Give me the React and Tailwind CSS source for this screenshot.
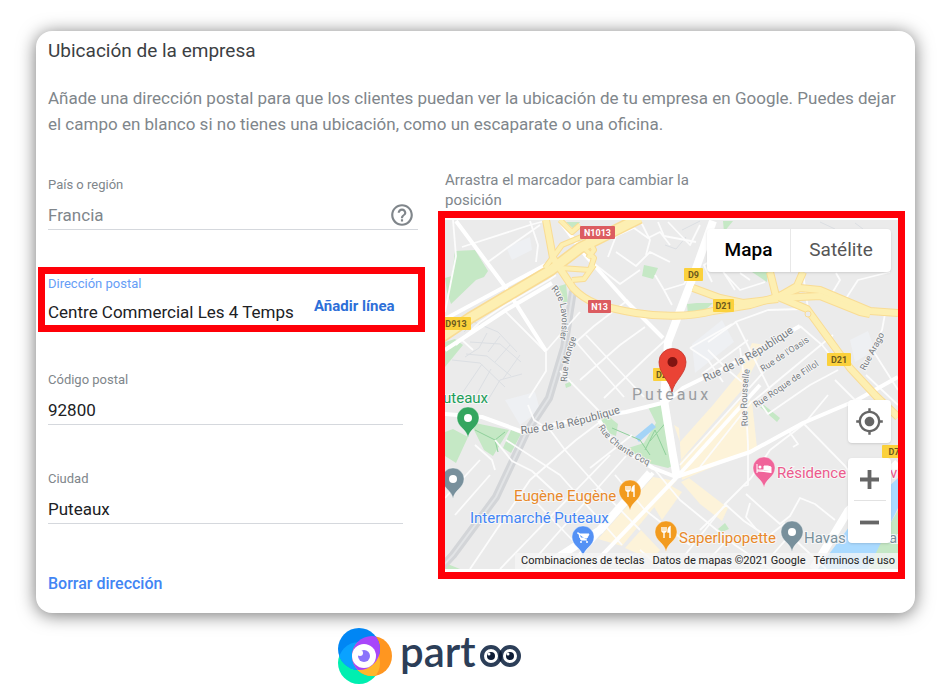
import React from "react";
import { MdHelpOutline, MdMyLocation } from "react-icons/md";

const PARKS = [
  "455,251 475,250 488,271 484,277 476,280 451,304 447,292 445,278 452,276",
  "445,342 455,339 463,345 445,367",
  "644,265 658,268 653,279 642,276",
  "556,287 566,284 568,303 563,302",
  "565,384 572,381 571,386 566,388",
  "470,422 509,430 493,456 484,450",
  "511,430 521,434 511,453 503,448",
  "445,432 453,429 468,437 456,463 445,456",
  "598,420 606,413 613,420 618,424 616,436 606,432",
  "648,407 665,403 674,465 668,468 644,462 625,449 644,443 656,423",
  "687,304 697,303 713,303 703,312 688,315",
  "723,221 733,221 724,232",
  "752,272 768,272 767,282",
  "760,407 764,405 780,418 777,422",
  "734,430 743,424 743,436",
  "718,529 725,523 729,529 722,532",
  "872,556 898,510 898,569 870,569",
  "445,563 460,569 445,569",
  "566,222 580,222 575,230",
];

const COMMERCIAL = [
  "598,539 653,477 676,481 622,546",
  "625,548 641,530 660,550 652,560",
  "674,425 679,428 681,460 742,390 765,345 752,343 740,372 713,405 680,442",
  "680,462 745,395 752,402 757,448 682,480",
  "681,482 689,478 728,508 722,521 700,504",
  "650,500 668,484 682,492 662,520",
];

const PALE_BLOCKS = [
  "506,247 530,237 532,250 512,260",
  "692,344 722,320 734,342 695,373",
  "850,340 868,331 875,350 855,362",
  "505,400 535,392 540,410 520,425",
];

const MINOR = [
  "M445 312L456 256L453 220", "M462 247L530 225L545 221", "M530 221L538 245L536 262",
  "M456 345L480 322L504 306L549 280L556 275", "M488 262L510 246L540 225",
  "M462 340L473 350", "M504 310L546 352L546 371L529 398", "M546 351L580 312",
  "M576 342L594 326L628 300", "M576 342L624 397", "M586 335L644 397", "M560 371L600 412",
  "M604 398L648 356L670 336", "M580 380L620 345L645 327",
  "M592 262L620 284L640 270", "M608 257L616 236L634 228L648 238L660 232L670 245",
  "M616 252L636 266L650 252L670 262", "M640 220L650 240L646 255", "M664 290L684 284L699 262",
  "M655 275L664 290L672 305", "M668 222L690 245L700 225", "M658 222L664 236L696 242",
  "M528 405L534 420L550 430L565 450L598 487L640 530", "M495 440L512 461L532 471L560 497",
  "M506 440L560 475L622 545", "M475 445L492 460L495 470", "M480 460L445 498",
  "M455 515L490 475", "M470 569L530 480L576 440L600 422",
  "M500 569L610 455", "M526 569L626 456", "M534 500L580 548",
  "M590 468L632 435", "M615 475L645 510L690 545",
  "M655 470L680 500L735 545L770 569", "M680 465L770 365", "M700 467L752 401",
  "M708 350L728 370L742 382", "M690 348L708 360L723 382", "M690 348L732 324",
  "M740 348L745 385L748 445L748 485L744 486", "M702 374L748 340", "M752 402L833 335",
  "M724 505L751 478L770 450L804 424L828 395", "M700 530L726 505L744 521L765 535",
  "M746 494L765 511L780 524L790 516L800 498L815 504L835 520",
  "M750 503L746 517L756 529", "M770 535L785 523", "M804 424L845 466L850 473",
  "M788 430L798 444L793 447", "M758 400L768 414L810 385L838 370",
  "M770 390L745 340L736 322L708 342", "M735 322L768 310L802 309",
  "M735 290L703 240L710 235L740 245", "M725 274L740 290L765 282", "M712 282L704 265L720 255",
  "M740 273L750 280", "M803 273L808 309", "M828 300L840 280L836 273",
  "M845 300L858 280L890 272", "M885 314L882 330L872 349L898 390",
  "M800 326L822 345L838 365", "M835 380L860 405",
  "M866 375L898 405", "M685 555L724 506", "M640 550L663 569", "M700 569L730 537",
  "M760 569L790 535L826 569",
];

const BACK_LANES = [
  "M464 332L474 322L498 332L517 352", "M470 342L500 344L521 362", "M466 354L487 356L511 376",
  "M452 360L480 363L505 387", "M482 364L463 392", "M491 369L474 399", "M487 333L479 348L465 357",
  "M500 336L488 352", "M510 345L495 362", "M520 355L503 379", "M488 400L500 380L522 374",
  "M682 230L700 221", "M820 222L835 229", "M855 223L863 229", "M665 245L676 249L686 237",
];

const MAJOR = [
  "M456 221L506 288L546 351", "M560 221L586 256L626 301L663 338",
  "M445 319L549 263", "M445 350L506 310L552 283",
  "M445 414L482 417L523 432L570 421L626 412L666 402L683 388L740 360L800 326",
  "M599 420L613 443L653 468L676 477", "M676 477L750 452L803 423L857 400L898 377",
  "M575 560L653 473", "M589 569L676 478L760 385",
];

const AVENUES = [
  "M713 221L690 285L668 342L664 400L672 450L677 478",
  "M813 569L848 511L898 463", "M540 569L600 530L650 473",
];

const HIGHWAYS = [
  "M546 220L553 258L573 288C586 302 600 307 636 313C660 317 690 317 713 311L750 305L777 297L800 288L820 290L870 311L898 313",
  "M693 288L720 298L743 303L778 299",
  "M770 272L776 296L807 309L850 368L876 396L898 417",
  "M803 272L797 286L778 297", "M780 298L820 296L860 312L870 314",
];

const RAMPS = [
  "M545 268L562 245L586 235L594 250L588 258", "M560 268L590 270L594 258L582 246",
  "M572 280L584 279L594 265", "M560 220L572 232L580 225",
];

const MOTORWAY = ["M440 338L470 318L551 270L580 248L640 218"];

const RAILWAY = ["M573 291L564 348L549 398L526 433L496 497L453 555L440 569"];

const PARK_PATHS = [
  "M475 430L495 440L498 452", "M495 440L505 432", "M645 450L655 430L666 455",
  "M650 441L668 420", "M612 428L640 440L650 455",
];

const SHIELDS = [
  { x: 580, y: 226, w: 35, label: "N1013", red: true },
  { x: 588, y: 300, w: 23, label: "N13", red: true },
  { x: 441, y: 317, w: 30, label: "D913" },
  { x: 684, y: 268, w: 19, label: "D9" },
  { x: 713, y: 299, w: 21, label: "D21" },
  { x: 827, y: 353, w: 24, label: "D21" },
  { x: 653, y: 368, w: 22, label: "D21" },
  { x: 882, y: 445, w: 24, label: "D7" },
];

const STREETS = [
  { id: "republique-w", d: "M521 434Q570 430 632 409", label: "Rue de la République", size: 11 },
  { id: "republique-e", d: "M705 382Q760 358 806 323", label: "Rue de la République", size: 11 },
  { id: "lavoisier", d: "M551 289Q568 305 558 350", label: "Rue Lavoisier", size: 9 },
  { id: "monge", d: "M567 382Q568 355 578 334", label: "Rue Monge", size: 9 },
  { id: "oasis", d: "M763 372L816 337", label: "Rue de l'Oasis", size: 9 },
  { id: "fillol", d: "M756 408L830 358", label: "Rue Roque de Fillol", size: 9 },
  { id: "rousselle", d: "M748 426Q745 390 751 364", label: "Rue Rousselle", size: 9 },
  { id: "arago", d: "M865 371L888 328", label: "Rue Arago", size: 9 },
  { id: "chante-coq", d: "M598 427Q612 452 662 471", label: "Rue Chante Coq", size: 9 },
];

const PLACES = [
  { x: 443, y: 403, label: "uteaux", color: "#1e9e5a" },
  { x: 514, y: 501, label: "Eugène Eugène", color: "#e8892b" },
  { x: 470, y: 523, label: "Intermarché Puteaux", color: "#4285f4" },
  { x: 777, y: 478, label: "Résidence", color: "#ec5b8d" },
  { x: 890, y: 478, label: "v", color: "#ec5b8d" },
  { x: 679, y: 543, label: "Saperlipopette", color: "#e8892b" },
  { x: 804, y: 543, label: "Havas", color: "#78909c" },
  { x: 889, y: 543, label: "ar", color: "#78909c" },
];

function Pin({ x, y, color, children }) {
  return (
    <g transform={`translate(${x} ${y})`}>
      <path
        d="M0 19C-1 10-11 8-11-1A11 11 0 0 1 11-1C11 8 1 10 0 19Z"
        fill={color}
        stroke="#fff"
        strokeOpacity="0.6"
        strokeWidth="0.6"
      />
      {children || <circle cy="-1" r="4" fill="#fff" />}
    </g>
  );
}

function Cutlery() {
  return (
    <g stroke="#fff" fill="none" strokeWidth="1.4">
      <path d="M-4-6V-2Q-4-1-2-1Q0-1 0-2V-6M-2-6V5" />
      <path d="M4 5V-6Q2-5 2-1H4" fill="#fff" />
    </g>
  );
}

function Lines({ paths, stroke, width }) {
  return (
    <g fill="none" stroke={stroke} strokeWidth={width} strokeLinejoin="round">
      {paths.map((d) => (
        <path key={d} d={d} />
      ))}
    </g>
  );
}

function Areas({ shapes, fill }) {
  return shapes.map((points) => <polygon key={points} points={points} fill={fill} />);
}

function MapCanvas() {
  return (
    <svg
      viewBox="445 220 453 349"
      preserveAspectRatio="xMidYMid slice"
      className="block h-[349px] w-full font-[Roboto,sans-serif]"
      role="img"
      aria-label="Mapa de Puteaux"
    >
      <rect x="345" y="120" width="653" height="549" fill="#ebebeb" />
      <Areas shapes={PALE_BLOCKS} fill="#eef0f3" />
      <Areas shapes={PARKS} fill="#c5e8c5" />
      <Areas shapes={COMMERCIAL} fill="#fdf3d9" />
      <polygon points="818,569 858,515 898,478 898,508 868,569" fill="#aadaff" />
      <polygon points="635,437 652,423 656,427 639,442" fill="#a4d4f7" />
      <Lines paths={PARK_PATHS} stroke="#8fd09b" width={1} />

      <Lines paths={RAILWAY} stroke="#d3d5d8" width={8} />
      <Lines paths={RAILWAY} stroke="#e2e4e6" width={2} />
      <Lines paths={BACK_LANES} stroke="#dcdfe3" width={1} />
      <Lines paths={MINOR} stroke="#fcfcfc" width={1.8} />
      <Lines paths={MAJOR} stroke="#ffffff" width={4} />
      <Lines paths={AVENUES} stroke="#ffffff" width={8} />

      <Lines paths={RAMPS} stroke="#f9dc94" width={6} />
      <Lines paths={HIGHWAYS} stroke="#f9dc94" width={8} />
      <Lines paths={MOTORWAY} stroke="#f9dc94" width={12} />
      <Lines paths={RAMPS} stroke="#fdefb2" width={4} />
      <Lines paths={HIGHWAYS} stroke="#fdefb2" width={6} />
      <Lines paths={MOTORWAY} stroke="#fdefb2" width={9} />
      <circle cx="808" cy="314" r="3" fill="#ebebeb" stroke="#f9dc94" />

      {STREETS.map((s) => (
        <g key={s.id}>
          <path id={s.id} d={s.d} fill="none" />
          <text fontSize={s.size} fill="#747a80" stroke="#f4f4f4" strokeWidth="2" paintOrder="stroke">
            <textPath href={`#${s.id}`}>{s.label}</textPath>
          </text>
        </g>
      ))}

      {SHIELDS.map((s) => (
        <g key={`${s.x}-${s.y}`}>
          <rect x={s.x} y={s.y} width={s.w} height="13" rx="1" fill={s.red ? "#dc5c60" : "#fbd13c"} />
          <text
            x={s.x + s.w / 2}
            y={s.y + 10}
            textAnchor="middle"
            fontSize="9"
            fontWeight="700"
            fill={s.red ? "#ffffff" : "#6b5a1e"}
          >
            {s.label}
          </text>
        </g>
      ))}

      <text x="632" y="400" fontSize="16" fill="#9a9da1" className="tracking-[3px]">
        Puteaux
      </text>

      {PLACES.map((p) => (
        <text
          key={p.label}
          x={p.x}
          y={p.y}
          fontSize="15"
          fill={p.color}
          stroke="#f7f7f7"
          strokeWidth="2"
          paintOrder="stroke"
        >
          {p.label}
        </text>
      ))}

      <Pin x={468} y={419} color="#34a65f" />
      <Pin x={453} y={480} color="#78909c" />
      <Pin x={792} y={533} color="#78909c" />
      <Pin x={630} y={492} color="#f29b1f"><Cutlery /></Pin>
      <Pin x={666} y={533} color="#f29b1f"><Cutlery /></Pin>
      <Pin x={583} y={538} color="#5491f5">
        <path d="M-6-5H-4L-2 2H4M-4-4H6L4 0H-3Z" fill="#fff" stroke="#fff" />
        <circle cx="-2" cy="4" r="1" fill="#fff" />
        <circle cx="4" cy="4" r="1" fill="#fff" />
      </Pin>
      <Pin x={764} y={469} color="#f0649a">
        <path d="M-7-5V4M-7 2H7V4M7 2V-2L4-3H0V1H-7" fill="#fff" stroke="#fff" />
        <circle cx="-4" cy="-2" r="1.5" fill="#fff" />
      </Pin>

      <path
        d="M672 392C670 381 659 374 659 362A13.500 13.500 0 0 1 686 362C686 374 674 381 672 392Z"
        fill="#ea4335"
        stroke="#c5332a"
        strokeWidth="0.8"
      />
      <circle cx="672.500" cy="362" r="5" fill="#811411" />
    </svg>
  );
}

function Field({ id, label, value, muted, children }) {
  return (
    <div>
      <label htmlFor={id} className="block text-[13px] leading-4 text-[#80868b]">
        {label}
      </label>
      <div className="mt-2 flex h-[29px] items-center border-b border-[#d5d8dd]">
        <input
          id={id}
          defaultValue={value}
          className={`min-w-0 flex-1 bg-transparent text-[17px] leading-6 outline-none ${muted ? "text-[#80868b]" : "text-[#202124]"}`}
        />
        {children}
      </div>
    </div>
  );
}

function LocationMap() {
  return (
    <div className="relative mt-px border-[7px] border-[#ff0008] bg-white pt-[2px] pb-[3px]">
      <MapCanvas />

      <div className="absolute top-[11px] right-[7px] flex h-[43px] rounded-sm bg-white text-[19px] shadow">
        <button className="w-[84px] border-r border-[#e8e8e8] font-medium text-black">Mapa</button>
        <button className="w-[100px] text-[#565656]">Satélite</button>
      </div>

      <div className="absolute right-[7px] bottom-[29px] flex w-[43px] flex-col gap-[15px] text-[#666666]">
        <button aria-label="Mi ubicación" className="flex h-[43px] items-center justify-center rounded-sm bg-white shadow">
          <MdMyLocation size={29} />
        </button>
        <div className="flex h-[85px] flex-col items-center rounded-sm bg-white shadow">
          <button aria-label="Acercar" className="flex w-full flex-1 items-center justify-center">
            <svg width="19" height="19" viewBox="0 0 20 20" stroke="currentColor" strokeWidth="4">
              <path d="M0 10H20M10 0V20" />
            </svg>
          </button>
          <div className="h-px w-8 bg-[#e2e2e2]" />
          <button aria-label="Alejar" className="flex w-full flex-1 items-center justify-center">
            <svg width="19" height="19" viewBox="0 0 20 20" stroke="currentColor" strokeWidth="4">
              <path d="M0 10H20" />
            </svg>
          </button>
        </div>
      </div>

      <div className="absolute right-0 bottom-[3px] flex h-4 items-center gap-2 bg-[#f5f5f5]/75 pr-[3px] pl-[6px] text-[11px] whitespace-nowrap text-[#222222]">
        <button>Combinaciones de teclas</button>
        <span>Datos de mapas ©2021 Google</span>
        <a href="#terminos">Términos de uso</a>
      </div>
    </div>
  );
}

function Eye({ cx }) {
  return (
    <g>
      <circle cx={cx} cy="28" r="9" fill="#fff" stroke="#2c3e58" strokeWidth="4" />
      <circle cx={cx} cy="28" r="4" fill="#0d1b34" />
      <circle cx={cx - 2} cy="26" r="1.500" fill="#fff" />
    </g>
  );
}

function Logo() {
  return (
    <svg width="184" height="58" viewBox="0 0 184 58" className="overflow-visible" role="img" aria-label="partoo">
      <defs>
        <clipPath id="blue-disc"><circle cx="21" cy="21" r="21" /></clipPath>
        <clipPath id="green-disc"><circle cx="21" cy="35" r="21" /></clipPath>
      </defs>
      <circle cx="21" cy="35" r="21" fill="#00efb0" />
      <circle cx="34" cy="28" r="20" fill="#ff9620" />
      <circle cx="21" cy="21" r="21" fill="#0086f4" />
      <circle cx="21" cy="35" r="21" fill="#0aa2ff" clipPath="url(#blue-disc)" />
      <circle cx="34" cy="28" r="20" fill="#ffb72b" clipPath="url(#green-disc)" />
      <circle cx="34" cy="28" r="20" fill="#a846fa" clipPath="url(#blue-disc)" />
      <circle cx="26" cy="28" r="12" fill="#fff" />
      <circle cx="26" cy="28" r="6" fill="#8b74fb" />
      <circle cx="22" cy="25" r="3" fill="#fff" />
      <text x="62" y="39" fontSize="42" fontWeight="600" fill="#2c3e58" className="font-[Lato,sans-serif]">
        part
      </text>
      <Eye cx={153} />
      <Eye cx={172} />
      <path d="M162.500 22Q166 28 162.500 34Q159 28 162.500 22Z" fill="#0d1b34" />
    </svg>
  );
}

export default function App() {
  return (
    <div className="bg-white pt-[31px] font-[Roboto,sans-serif]">
      <main className="mr-[35px] ml-9 rounded-2xl bg-white pt-2 pr-[10px] pb-[19px] pl-3 shadow-[0_2px_18px_rgba(0,0,0,0.55)]">
        <h1 className="text-[19px] leading-6 text-[#3c4043]">Ubicación de la empresa</h1>
        <p className="mt-[22px] text-[17px] leading-[26px] text-[#80868b]">
          Añade una dirección postal para que los clientes puedan ver la ubicación de tu empresa en Google. Puedes dejar
          el campo en blanco si no tienes una ubicación, como un escaparate o una oficina.
        </p>

        <div className="mt-[33px] grid grid-cols-[370fr_467fr] gap-5">
          <form className="min-w-0 pt-[7px]">
            <Field id="pais" label="País o región" value="Francia" muted>
              <button type="button" aria-label="Ayuda" className="mr-[3px] text-[#80868b]">
                <MdHelpOutline size={26} />
              </button>
            </Field>

            <div className="mt-[37px] -mr-[7px] -ml-[10px] border-[7px] border-[#ff0008] pt-[2px] pb-px pl-[3px]">
              <label htmlFor="direccion" className="block text-[13px] leading-4 text-[#669df6]">
                Dirección postal
              </label>
              <div className="mt-2 flex h-6 items-start">
                <input
                  id="direccion"
                  defaultValue="Centre Commercial Les 4 Temps"
                  className="w-[266px] min-w-0 text-[17px] leading-6 text-[#202124] outline-none"
                />
                <button type="button" className="text-[15px] leading-3 font-bold whitespace-nowrap text-[#2d6fd8]">
                  Añadir línea
                </button>
              </div>
            </div>

            <div className="mt-10 mr-[15px]">
              <Field id="codigo" label="Código postal" value="92800" />
            </div>
            <div className="mt-[46px] mr-[15px]">
              <Field id="ciudad" label="Ciudad" value="Puteaux" />
            </div>
            <button type="button" className="mt-[50px] block text-base leading-5 font-medium text-[#4285f4]">
              Borrar dirección
            </button>
          </form>

          <section className="min-w-0">
            <p className="max-w-[260px] pl-[7px] text-[15px] leading-5 text-[#80868b]">
              Arrastra el marcador para cambiar la posición
            </p>
            <LocationMap />
          </section>
        </div>
      </main>

      <footer className="mt-[15px] flex justify-center pr-[90px]">
        <Logo />
      </footer>
    </div>
  );
}
